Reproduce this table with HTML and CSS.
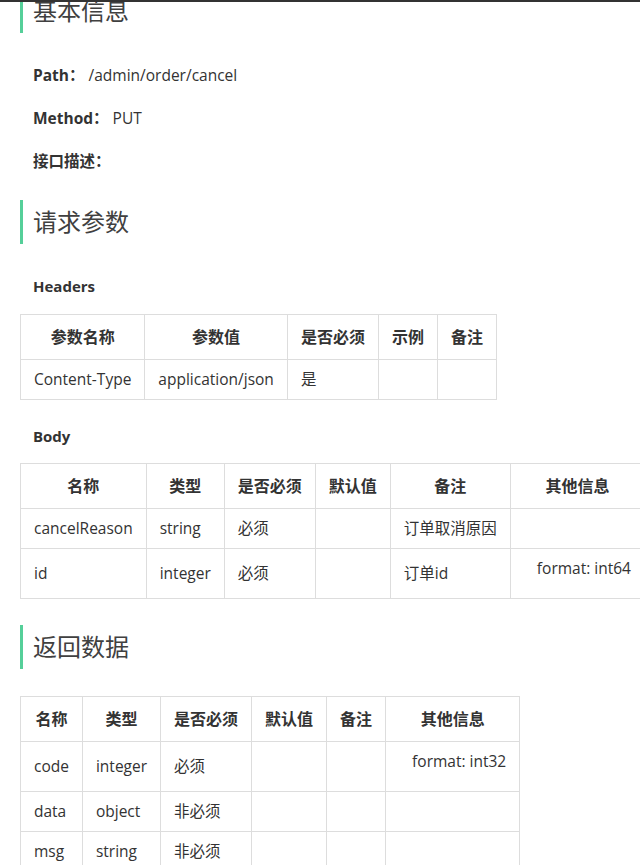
FILE: index.html
```html
<!DOCTYPE html>
<html lang="zh-CN">
<head>
  <meta charset="UTF-8">
  <title>取消订单 - 接口文档</title>
  <link rel="stylesheet" href="styles.css">
</head>
<body>
<div class="topbar"></div>

<div class="doc">
  <h2 class="section-title first">基本信息</h2>

  <div class="info">
    <p><b>Path：</b> /admin/order/cancel</p>
    <p><b>Method：</b> PUT</p>
    <p><b>接口描述：</b></p>
  </div>

  <h2 class="section-title">请求参数</h2>

  <h4 class="sub-title">Headers</h4>
  <table class="params">
    <thead>
      <tr>
        <th>参数名称</th>
        <th>参数值</th>
        <th>是否必须</th>
        <th>示例</th>
        <th>备注</th>
      </tr>
    </thead>
    <tbody>
      <tr>
        <td>Content-Type</td>
        <td>application/json</td>
        <td>是</td>
        <td></td>
        <td></td>
      </tr>
    </tbody>
  </table>

  <h4 class="sub-title">Body</h4>
  <table class="params">
    <thead>
      <tr>
        <th>名称</th>
        <th>类型</th>
        <th>是否必须</th>
        <th>默认值</th>
        <th>备注</th>
        <th>其他信息</th>
      </tr>
    </thead>
    <tbody>
      <tr>
        <td>cancelReason</td>
        <td>string</td>
        <td>必须</td>
        <td></td>
        <td>订单取消原因</td>
        <td></td>
      </tr>
      <tr>
        <td>id</td>
        <td>integer</td>
        <td>必须</td>
        <td></td>
        <td>订单id</td>
        <td><span class="meta">format: int64</span></td>
      </tr>
    </tbody>
  </table>

  <h2 class="section-title">返回数据</h2>

  <table class="params result">
    <thead>
      <tr>
        <th>名称</th>
        <th>类型</th>
        <th>是否必须</th>
        <th>默认值</th>
        <th>备注</th>
        <th>其他信息</th>
      </tr>
    </thead>
    <tbody>
      <tr>
        <td>code</td>
        <td>integer</td>
        <td>必须</td>
        <td></td>
        <td></td>
        <td><span class="meta">format: int32</span></td>
      </tr>
      <tr>
        <td>data</td>
        <td>object</td>
        <td>非必须</td>
        <td></td>
        <td></td>
        <td></td>
      </tr>
      <tr>
        <td>msg</td>
        <td>string</td>
        <td>非必须</td>
        <td></td>
        <td></td>
        <td></td>
      </tr>
    </tbody>
  </table>
</div>
</body>
</html>
```

FILE: styles.css
```css
html {
  overflow: hidden;
}

body {
  margin: 0;

  font-family: 'Open Sans', 'Noto Sans CJK SC', sans-serif;
  font-size: 15.5px;
  color: #333333;
  background: #ffffff;
}

.topbar {
  height: 2px;
  background: #333333;
}

.doc {
  overflow: hidden;
  padding: 0 20px 40px;
}

.section-title {
  margin: 26px 0 0;
  padding-left: 10px;
  border-left: 3px solid #55cf99;

  font-size: 24px;
  font-weight: normal;
  line-height: 44px;
  color: #404040;
}

.section-title.first {
  margin-top: -13px;
}

.info {
  padding: 31px 0 2px;
}

.info p {
  margin: 0 0 21px;
  padding-left: 13px;
  line-height: 22px;
}

.info p:last-child {
  margin-bottom: 0;
}

.info b {
  font-weight: bold;
}

.sub-title {
  margin: 31px 0 17px;
  padding-left: 13px;
  font-size: 15px;
  line-height: 22px;
}

.params + .sub-title {
  margin-top: 25px;
  margin-bottom: 16px;
}

.params {
  border-collapse: collapse;
}

.params.result {
  margin-top: 27px;
}

.params th,
.params td {
  border: 1px solid #dddddd;
  white-space: nowrap;
}

.params th {
  padding: 8px 13px;
  font-size: 16px;
  font-weight: bold;
  line-height: 28px;
  text-align: center;
}

.params td {
  padding: 6px 13px;
  line-height: 27px;
  vertical-align: middle;
}

.meta {
  display: block;
  padding-left: 13px;
  margin-bottom: 10px;
}
```
